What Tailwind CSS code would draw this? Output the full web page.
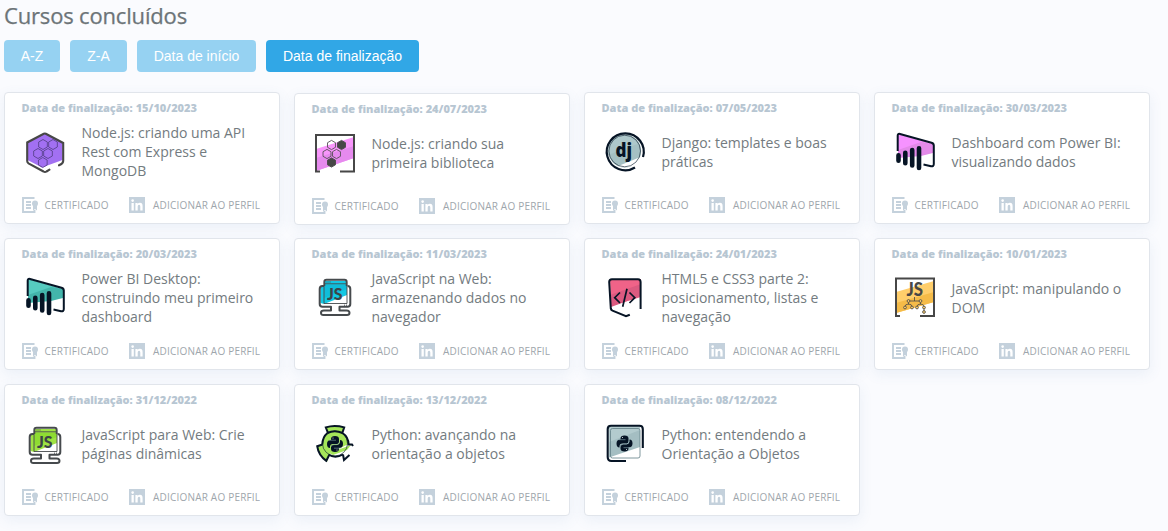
<!DOCTYPE html>
<html lang="pt-BR">
<head>
<meta charset="utf-8">
<title>Cursos concluídos</title>
<script src="https://cdn.jsdelivr.net/npm/@tailwindcss/browser@4"></script>
</head>
<body class="h-[531px] overflow-hidden bg-[#fafbfe] pl-1 font-['Open_Sans',sans-serif]">
<h1 class="h-10 text-[22px] leading-[31px] font-medium tracking-[-0.17px] text-[#6c7478] [-webkit-text-stroke:0.25px_#6c7478]">Cursos concluídos</h1>
<nav class="flex h-8 gap-2.5 font-['Liberation_Sans',sans-serif] text-[14px] text-white">
<button class="w-14 rounded-[4px] bg-[#96d2f2]">A-Z</button>
<button class="w-[57px] rounded-[4px] bg-[#96d2f2]">Z-A</button>
<button class="w-[119px] rounded-[4px] bg-[#96d2f2]">Data de início</button>
<button class="w-[153px] rounded-[4px] bg-[#31a7e6]">Data de finalização</button>
</nav>
<main id="courses" class="mt-5 grid grid-cols-[repeat(4,276px)] gap-[14px]"></main>
<script>
const hex = (x, y, r, fill, stroke) => `<polygon points="${[0,1,2,3,4,5].map(i => { const a = Math.PI / 3 * i + Math.PI / 6; return (x + r * Math.cos(a)).toFixed(2) + ',' + (y + r * Math.sin(a)).toFixed(2); }).join(' ')}" fill="${fill}" stroke="${stroke}" stroke-width=".9"/>`;
const bars = (c1, c2) => `<path d="M13 14 48 24V32L13 35Z" fill="${c1}"/><path d="M13 30 36 22 48 24V33L36 36 13 38Z" fill="${c2}"/>
<path d="M12.700 31V15.500Q12.700 13.400 15 14L46.500 22.800Q48.800 23.500 48.800 25.500V44Q48.800 46.700 46 46.200L38.500 44.600" fill="none" stroke="#061425" stroke-width="2"/>
<path d="M13.500 35.300V40.700M20.300 32.800V43.200M27.200 30V45.500M34 28.300V48" stroke="#061425" stroke-width="4.600" stroke-linecap="round"/>`;
const monitor = (c1, c2) => `<path d="M15.500 22H19V16H42V30L19 39 15.500 38Z" fill="${c1}"/><path d="M19 20H42V24L19 33Z" fill="${c2}"/>
<path d="M19.500 18.800H42M19 21V38.500H42V21" fill="none" stroke="#464a4d" stroke-width=".9"/><path d="M21.500 17H26" stroke="#464a4d" stroke-width="1" stroke-dasharray="1 1"/>
<path d="M19 21H17.500Q14.700 21 14.700 24V39Q14.700 41.800 17.500 41.800H26V45.500H19Q16 45.500 16 47.800T18.500 50H42Q44.500 50 44.500 47.800T41.500 45.500H34.500V41.800H42.500Q45.300 41.800 45.300 39V24Q45.300 21 42.500 21" fill="none" stroke="#464a4d" stroke-width="2" stroke-linejoin="round"/>
<path d="M19.300 21V17Q19.300 14.700 21.500 14.700H39.500Q41.700 14.700 41.700 17V21" fill="none" stroke="#464a4d" stroke-width="1.900"/>
<path d="M39 40.200H43" stroke="#464a4d" stroke-dasharray="1 1"/>
<text x="22" y="35.300" textLength="15.500" lengthAdjust="spacingAndGlyphs" font-family="Lato" font-size="16" font-weight="900" fill="#3c4448">JS</text>`;
const python = (x, y) => `<g transform="translate(${x} ${y})"><path d="M-4 -4V-5Q-4-8 0-8 4-8 4-5V-2Q4 0 1 0H-2Q-5 0-5 3V4Q-8 4-8 0-8-4-4-4ZM4 4V5Q4 8 0 8-4 8-4 5V2.500Q-4 .7-1 .7H2Q5 .7 5-3V-4Q8-4 8 0 8 4 4 4Z" fill="#061425"/><path d="M-6-3.800H1M6 4.200H-1M-4 3Q-4 .6-1 .6H2Q4.500.3 4.500-2.500" fill="none" stroke="#a4c5c8" stroke-width=".5"/><circle cx="-2" cy="-6" r=".5" fill="#fff"/><circle cx="2" cy="6" r=".5" fill="#fff"/></g>`;
const icons = {
node: `<path d="M29.800 12.500 47.500 22V39.500L27 47 12.500 39.500V22Z" fill="#a270f2"/>${[[28,24],[38,24],[23,33],[33,33],[27.800,42]].map(p => hex(p[0], p[1], 5, 'none', '#59438f')).join('')}
<path d="M44 44.800Q48.200 43 48.200 40.500V22.500L30.800 13.200Q29.800 12.700 28.800 13.200L12.200 22V40.500Q12.200 42 13.500 42.800L28.500 51Q30 52 31.500 51L34.500 49.200" fill="none" stroke="#474747" stroke-width="2.100" stroke-linecap="round"/>`,
lib: `<path d="M11 27 49 15V36L11 49Z" fill="#f896fb"/><path d="M11 36 49 24V36L11 49Z" fill="#e68aee"/>${[[26.500,23],[22,32],[31.500,32]].map(p => hex(p[0], p[1], 4.600, 'none', '#575057')).join('')}${hex(36.500,23,4.600,'#474747','#474747')}${hex(26.500,40.500,4.600,'#474747','#474747')}
<path d="M15 49.500H11V13H49V49.500H35" fill="none" stroke="#474747" stroke-width="2"/>`,
django: `<circle cx="29.700" cy="31" r="16.500" fill="#a5c0c3"/><path d="M13 32A17 17 0 0 1 35 15L45 23 13 35Z" fill="#aec8cb"/><path d="M22 46.500 45.500 37Q42 48 29.700 47.200Z" fill="#fff"/><circle cx="29.700" cy="31" r="15.800" fill="none" stroke="#20303f" stroke-width=".7"/>
<path d="M48 37A18.500 18.500 0 1 0 40 47.500" fill="none" stroke="#061425" stroke-width="2.200"/><text x="20.500" y="37.300" textLength="16.500" lengthAdjust="spacingAndGlyphs" font-family="Open Sans" font-size="20" font-weight="800" fill="#061425">dj</text>`,
bi: bars('#f692ff', '#e38ae9'), biTeal: bars('#56cbc0', '#43b5ab'),
jsBlue: monitor('#12c8e4', '#10bcd9'), jsGreen: monitor('#9fe344', '#8edc32'),
html: `<path d="M15 14H46V32L16 41Z" fill="#f06388"/><path d="M15 30 46 19V31L16 42Z" fill="#dc5a80"/>
<path d="M45.600 44V17Q45.600 14.200 43 14.200H17Q14.200 14.200 14.200 17L15.800 43.500Q16 45 17.500 45.700L31 51.200 34.800 49.700" fill="none" stroke="#061425" stroke-width="2"/><path d="M25 27.500 19.700 32.700 25 38M34.500 27.500 39.800 32.700 34.500 38M32 23.800 27.700 41.800" fill="none" stroke="#061425" stroke-width="1.700"/>`,
dom: `<path d="M11 27 49 16V37L11 48Z" fill="#ffce6b"/><path d="M11 38 49 27V37L11 48Z" fill="#f5bb48"/><path d="M15 51H11V13.500H49V51H35" fill="none" stroke="#474747" stroke-width="2"/>
<text x="21.500" y="31.300" textLength="16.500" lengthAdjust="spacingAndGlyphs" font-family="Lato" font-size="18.500" font-weight="900" fill="#474747">JS</text>
<path d="M29.500 32V36M24 36H36M23.500 37V39.500M35.500 37V39.500M20 42Q20 39 23.500 39T27 42M32 42Q32 39 35.500 39T39 42V46" fill="none" stroke="#474747" stroke-width=".8"/>${[[23.500,36],[35.500,36],[20,42.500],[27,42.500],[32,42.500],[39,42.500],[39,47]].map(p => `<circle cx="${p[0]}" cy="${p[1]}" r="1.400" fill="#ffce6b" stroke="#474747" stroke-width=".8"/>`).join('')}`,
pyGreen: `<path d="M20.500 14Q29.500 11.500 39.500 14L37.300 20Q43 24 43.500 31L25 40 22 49Q13.500 43 12 33L17.500 31Q18 24 23 20Z" fill="#a5e65a"/><path d="M24 40 46 32 42 37 28 42Z" fill="#a5e65a"/><circle cx="30" cy="30.500" r="12.500" fill="none" stroke="#1b3435" stroke-width=".7"/>
<path d="M23 20 20.800 14.400Q29.500 11.500 39.200 14.400L37.300 20M17.500 31.500 12.200 33.200Q13.500 42.500 21.300 47.800L24.200 42M38 41.500 39 47 44.500 42M22.500 20Q29.500 16.500 37.500 20 43.500 24 43.600 31.500H47L48 33" fill="none" stroke="#061425" stroke-width="2"/><path d="M17.300 31.500Q17.500 24 22.500 20M23.500 41.500Q30 46 38 41.500" fill="none" stroke="#061425" stroke-width="2"/>${python(30,31)}`,
pySquare: `<rect x="14" y="13.500" width="31" height="31.500" fill="#fff"/><path d="M14 13.500H45V34L14 44.500Z" fill="#a4bec2"/><path d="M14 13.500H45V17L14 29Z" fill="#b3cbce"/><rect x="15.500" y="15.500" width="29.500" height="29.500" rx="2" fill="none" stroke="#617d85" stroke-width=".8"/>
<path d="M47.800 35V16Q47.800 12.800 44.500 12.800H16Q12.700 12.800 12.700 16V44Q12.700 48 16.500 48H31" fill="none" stroke="#061425" stroke-width="2.100"/>${python(29.500,30.500)}`
};
// Date, title, icon, vertical origin of the icon drawing
const data = [
['15/10/2023','Node.js: criando uma API<br>Rest com Express e<br>MongoDB','node',1.5],
['24/07/2023','Node.js: criando sua<br>primeira biblioteca','lib',1],
['07/05/2023','Django: templates e boas<br>práticas','django',2],
['30/03/2023','Dashboard com Power BI:<br>visualizando dados','bi',2],
['20/03/2023','Power BI Desktop:<br>construindo meu primeiro<br>dashboard','biTeal',3],
['11/03/2023','JavaScript na Web:<br>armazenando dados no<br>navegador','jsBlue',3],
['24/01/2023','HTML5 e CSS3 parte 2:<br>posicionamento, listas e<br>navegação','html',3],
['10/01/2023','JavaScript: manipulando o<br>DOM','dom',3],
['31/12/2022','JavaScript para Web: Crie<br>páginas dinâmicas','jsGreen',1],
['13/12/2022','Python: avançando na<br>orientação a objetos','pyGreen',1],
['08/12/2022','Python: entendendo a<br>Orientação a Objetos','pySquare',1]];
document.getElementById('courses').innerHTML = data.map(([date, title, icon, dy], i) => `
<article class="h-[132px] rounded-[4px] border border-[#e1e5eb] bg-white shadow-[0_4px_14px_rgba(80,120,180,0.09)] ${i === 1 ? 'translate-y-px' : ''}">
<p class="h-[29px] pl-[16.5px] text-[11px] leading-[30px] font-extrabold text-[#b7c6d2] whitespace-nowrap">Data de finalização: ${date}</p>
<div class="flex h-[60px] items-center pl-2.5">
<svg class="mr-[6.5px] shrink-0" width="60" height="60" viewBox="0 ${dy} 60 60">${icons[icon]}</svg>
<h2 class="text-[14px] leading-[19px] font-normal text-[#737b80] whitespace-nowrap ${title.split('<br>').length === 3 ? 'mb-px' : ''}">${title}</h2>
</div>
<div class="flex items-center pt-[14px] pl-[17px] text-[10px] leading-[18px] tracking-[0.2px] text-[#9ea6ac] whitespace-nowrap">
<span class="flex w-[107px] items-center gap-[6.5px]"><svg width="16" height="16" viewBox="0 0 16 16"><path d="M12.500 1H1V15H12.500V13M4 5H9M4 8H9M4 11H9" fill="none" stroke="#c4d1dc" stroke-width="1.900"/><circle cx="13" cy="6.500" r="3" fill="#c4d1dc"/><path d="M11 8.500H15V13.500L13 12 11 13.500Z" fill="#c4d1dc"/></svg>CERTIFICADO</span>
<span class="flex items-center gap-2"><svg width="16" height="16" viewBox="0 0 16 16"><path d="M0 0H16V16H0Z" fill="#c4d1dc"/><path d="M2.500 6H4.800V13.500H2.500ZM6.400 6H8.600V7Q9.300 5.800 11 5.800 13.600 5.800 13.600 9V13.500H11.300V9.500Q11.300 7.700 10.100 7.700 8.700 7.700 8.700 9.500V13.500H6.400Z" fill="#fff"/><circle cx="3.650" cy="3.600" r="1.300" fill="#fff"/></svg>ADICIONAR AO PERFIL</span>
</div>
</article>`).join('');
</script>
</body>
</html>
